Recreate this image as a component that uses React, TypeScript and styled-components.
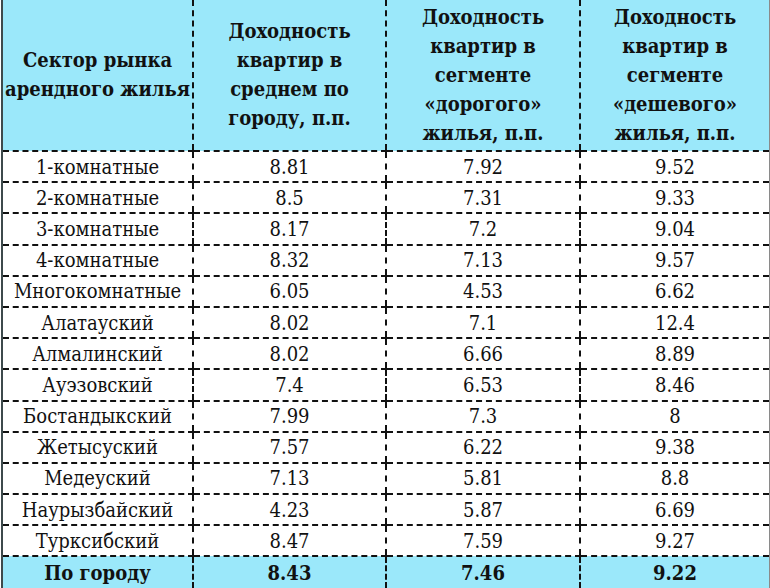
import styled, { createGlobalStyle } from "styled-components";

const SERIF = `"DejaVu Serif Condensed", "DejaVu Serif", "Liberation Serif", serif`;

const GlobalStyle = createGlobalStyle`
  html, body {
    margin: 0;
    padding: 0;
    background: #ffffff;
  }
  body {
    font-family: ${SERIF};
    color: #111111;
  }
`;

type Row = { name: string; avg: string; expensive: string; cheap: string };

const rows: Row[] = [
  { name: "1-комнатные", avg: "8.81", expensive: "7.92", cheap: "9.52" },
  { name: "2-комнатные", avg: "8.5", expensive: "7.31", cheap: "9.33" },
  { name: "3-комнатные", avg: "8.17", expensive: "7.2", cheap: "9.04" },
  { name: "4-комнатные", avg: "8.32", expensive: "7.13", cheap: "9.57" },
  { name: "Многокомнатные", avg: "6.05", expensive: "4.53", cheap: "6.62" },
  { name: "Алатауский", avg: "8.02", expensive: "7.1", cheap: "12.4" },
  { name: "Алмалинский", avg: "8.02", expensive: "6.66", cheap: "8.89" },
  { name: "Ауэзовский", avg: "7.4", expensive: "6.53", cheap: "8.46" },
  { name: "Бостандыкский", avg: "7.99", expensive: "7.3", cheap: "8" },
  { name: "Жетысуский", avg: "7.57", expensive: "6.22", cheap: "9.38" },
  { name: "Медеуский", avg: "7.13", expensive: "5.81", cheap: "8.8" },
  { name: "Наурызбайский", avg: "4.23", expensive: "5.87", cheap: "6.69" },
  { name: "Турксибский", avg: "8.47", expensive: "7.59", cheap: "9.27" },
];

const total: Row = { name: "По городу", avg: "8.43", expensive: "7.46", cheap: "9.22" };

const colWidths = [191, 193, 194, 190];

function App() {
  return (
    <>
      <GlobalStyle />
      <Frame>
        <Table>
          <colgroup>
            {colWidths.map((w, idx) => (
              <col key={idx} style={{ width: w }} />
            ))}
          </colgroup>
          <thead>
            <HeadRow>
              <HeadCell>
                Сектор рынка
                <br />
                арендного жилья
              </HeadCell>
              <HeadCell>
                Доходность
                <br />
                квартир в
                <br />
                среднем по
                <br />
                городу, п.п.
              </HeadCell>
              <HeadCell>
                Доходность
                <br />
                квартир в
                <br />
                сегменте
                <br />
                «дорогого»
                <br />
                жилья, п.п.
              </HeadCell>
              <HeadCell>
                Доходность
                <br />
                квартир в
                <br />
                сегменте
                <br />
                «дешевого»
                <br />
                жилья, п.п.
              </HeadCell>
            </HeadRow>
          </thead>
          <tbody>
            {rows.map((row) => (
              <BodyRow key={row.name}>
                <Cell>{row.name}</Cell>
                <Cell>{row.avg}</Cell>
                <Cell>{row.expensive}</Cell>
                <Cell>{row.cheap}</Cell>
              </BodyRow>
            ))}
            <TotalRow>
              <Cell $bold>{total.name}</Cell>
              <Cell $bold>{total.avg}</Cell>
              <Cell $bold>{total.expensive}</Cell>
              <Cell $bold>{total.cheap}</Cell>
            </TotalRow>
          </tbody>
        </Table>
      </Frame>
    </>
  );
}
export default App;

const Frame = styled.div`
  width: 770px;
  height: 588px;
  overflow: hidden;
  padding-left: 1px;
  box-sizing: border-box;
`;

const Table = styled.table`
  width: 768px;
  border-collapse: collapse;
  table-layout: fixed;
  border-left: 2px solid #3d4a4c;
  border-right: 2px solid #8a8a8a;
`;

const HeadRow = styled.tr`
  height: 151px;
  background: #9be8fa;
`;

const HeadCell = styled.th`
  font-family: ${SERIF};
  font-size: 20px;
  line-height: 29px;
  font-weight: bold;
  text-align: center;
  vertical-align: middle;
  padding: 0;
  white-space: nowrap;
  border-left: 2px dashed #111;
  border-bottom: 2px dashed #111;
  &:first-child {
    border-left: none;
  }
`;

const BodyRow = styled.tr`
  height: 31.2px;
  background: #ffffff;
`;

const TotalRow = styled.tr`
  height: 33px;
  background: #9be8fa;
`;

const Cell = styled.td<{ $bold?: boolean }>`
  font-family: ${SERIF};
  font-size: 20px;
  line-height: 24px;
  font-weight: ${(p) => (p.$bold ? "bold" : "normal")};
  text-align: center;
  vertical-align: middle;
  padding: 0;
  white-space: nowrap;
  border-left: 2px dashed #111;
  border-bottom: 2px dashed #111;
  &:first-child {
    border-left: none;
  }
`;
